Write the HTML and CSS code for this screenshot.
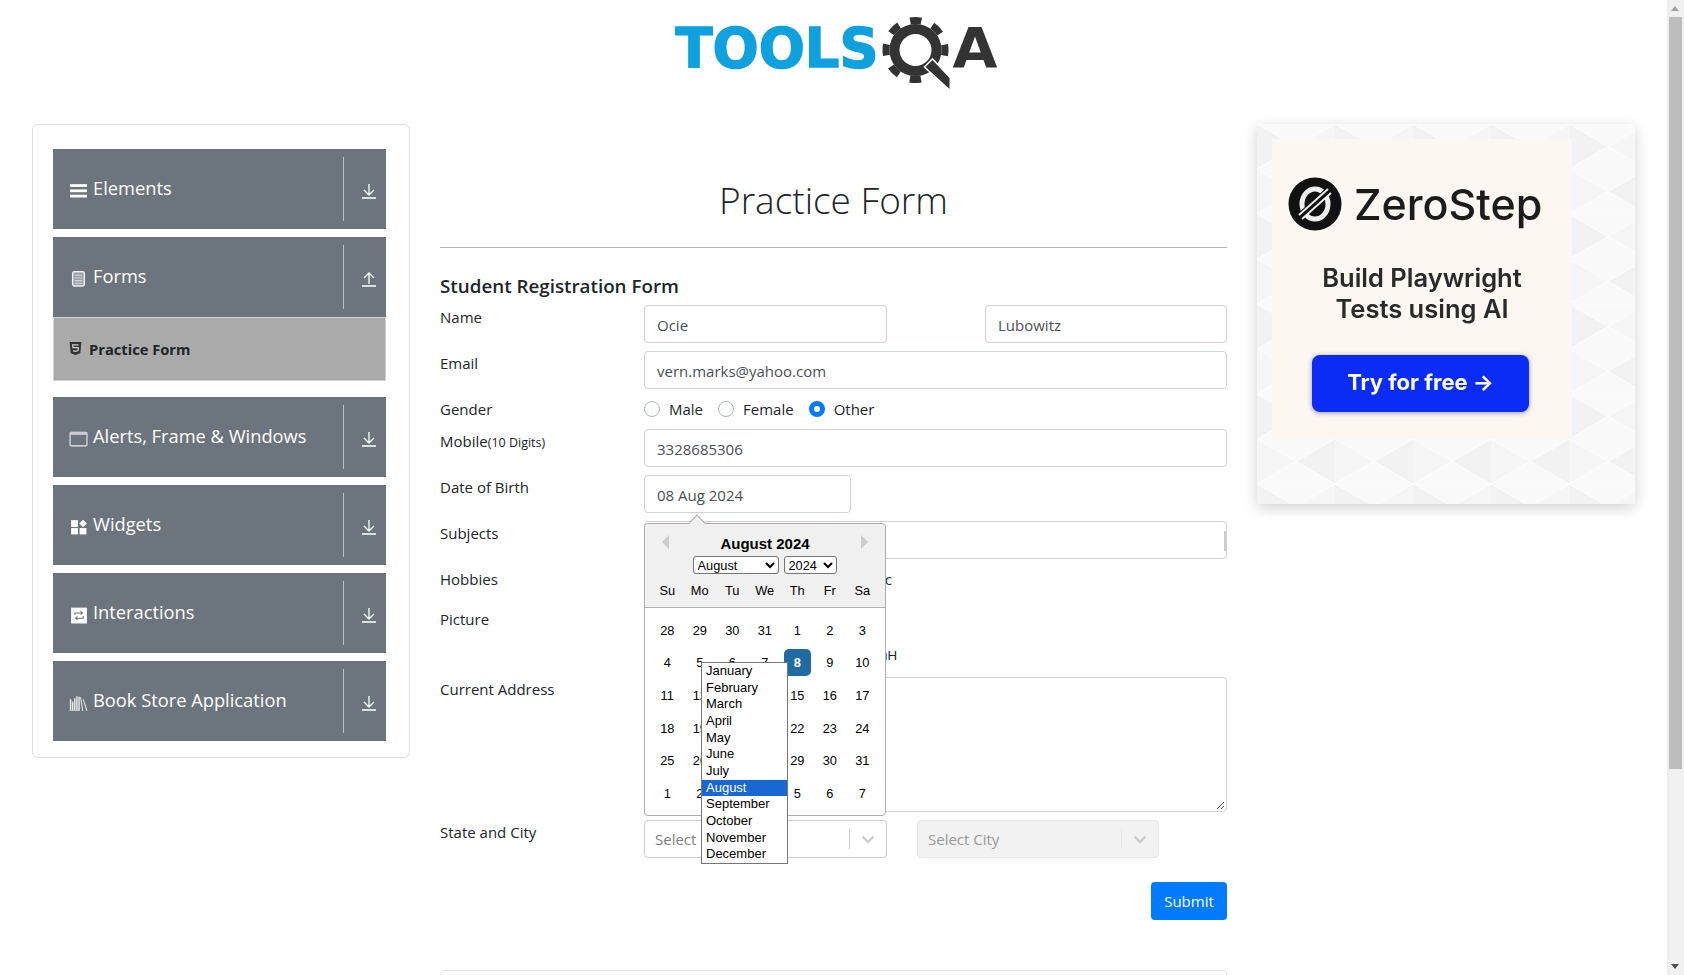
FILE: index.html
```html
<!doctype html>
<html>

	<head>

		<meta name="viewport" content="width=device-width, initial-scale=1.0">
		<title>ToolsQA</title>

		<link rel="stylesheet" href="styles.css">

	</head>

	<body>

		<header class="siteHeader">
			<svg class="logo" viewBox="663.5 0 340 100" width="340" height="100">
				<text class="logoTools" x="675" y="67" textLength="203" lengthAdjust="spacingAndGlyphs">TOOLS</text>
				<circle cx="915" cy="50" r="21" fill="none" stroke="#333" stroke-width="10"/>
				<circle cx="915" cy="50" r="29.5" fill="none" stroke="#333" stroke-width="7" stroke-dasharray="11.2 11.97" stroke-dashoffset="5.6"/>
				<polygon points="925,67 932,60 949,78 949,89" fill="#333" stroke="#fff" stroke-width="3" paint-order="stroke"/>
				<text class="logoA" x="952" y="67" textLength="45" lengthAdjust="spacingAndGlyphs">A</text>
			</svg>
		</header>

		<div class="pageGrid">

			<aside class="sideCard">

				<div class="group">
					<div class="groupHeader">
						<span class="groupTitle">
							<svg class="groupIcon" viewBox="0 0 18 18"><rect x="1" y="3" width="16" height="2.6" fill="#fff"/><rect x="1" y="8" width="16" height="2.6" fill="#fff"/><rect x="1" y="13" width="16" height="2.6" fill="#fff"/></svg>
							Elements
						</span>
						<span class="groupArrow"><svg viewBox="0 0 16 16"><path d="M8 1v10M3 7l5 5 5-5M1 15h14" fill="none" stroke="#fff" stroke-width="1.3"/></svg></span>
					</div>
				</div>

				<div class="group">
					<div class="groupHeader">
						<span class="groupTitle">
							<svg class="groupIcon" viewBox="0 0 18 18"><rect x="3.5" y="2.5" width="11" height="13.5" rx="1.5" fill="#9aa0a6" stroke="#eee" stroke-width="1.4"/><path d="M5.5 6h7M5.5 8.5h7M5.5 11h7M5.5 13.5h7" stroke="#d8d8d8" stroke-width="1"/></svg>
							Forms
						</span>
						<span class="groupArrow"><svg viewBox="0 0 16 16"><path d="M8 13V3M3 7l5-5 5 5M1 15h14" fill="none" stroke="#fff" stroke-width="1.3"/></svg></span>
					</div>
					<div class="subItem">
						<svg class="subIcon" viewBox="0 0 14 14"><path d="M1.5 1h11l-1 10.5L7 13l-4.5-1.5z" fill="#333"/><path d="M9.8 3.6H4.4l.2 2.6h5l-.2 2.7L7 9.7l-2.3-.8" fill="none" stroke="#ccc" stroke-width="1.2"/></svg>
						Practice Form
					</div>
				</div>

				<div class="group groupGap">
					<div class="groupHeader">
						<span class="groupTitle">
							<svg class="groupIcon" viewBox="0 0 18 18"><rect x="1" y="3" width="16" height="13" rx="1" fill="none" stroke="#eee" stroke-width="1"/><rect x="1" y="3" width="16" height="2.6" fill="#c8ccd0"/></svg>
							Alerts, Frame &amp; Windows
						</span>
						<span class="groupArrow"><svg viewBox="0 0 16 16"><path d="M8 1v10M3 7l5 5 5-5M1 15h14" fill="none" stroke="#fff" stroke-width="1.3"/></svg></span>
					</div>
				</div>

				<div class="group">
					<div class="groupHeader">
						<span class="groupTitle">
							<svg class="groupIcon" viewBox="0 0 18 18"><rect x="2" y="3" width="6.5" height="6.5" fill="#fff"/><rect x="2" y="10.5" width="6.5" height="6" fill="#fff"/><rect x="10" y="10.5" width="6.5" height="6" fill="#fff"/><path d="M13.3 2.5l3.6 3.6-3.6 3.6-3.6-3.6z" fill="#fff"/></svg>
							Widgets
						</span>
						<span class="groupArrow"><svg viewBox="0 0 16 16"><path d="M8 1v10M3 7l5 5 5-5M1 15h14" fill="none" stroke="#fff" stroke-width="1.3"/></svg></span>
					</div>
				</div>

				<div class="group">
					<div class="groupHeader">
						<span class="groupTitle">
							<svg class="groupIcon" viewBox="0 0 18 18"><rect x="2" y="2.500" width="15" height="15" fill="#fff"/><path d="M5.500 9.500V7.500h7M11 5.800l1.800 1.700L11 9.200M13.500 10.500v2h-7M8 14.200l-1.800-1.700L8 10.800" fill="none" stroke="#6c757d" stroke-width="1"/></svg>
							Interactions
						</span>
						<span class="groupArrow"><svg viewBox="0 0 16 16"><path d="M8 1v10M3 7l5 5 5-5M1 15h14" fill="none" stroke="#fff" stroke-width="1.3"/></svg></span>
					</div>
				</div>

				<div class="group">
					<div class="groupHeader">
						<span class="groupTitle">
							<svg class="groupIcon" viewBox="0 0 18 18"><path d="M1.500 6v11M3.500 8v9M5.500 5v12M7.500 3v14M9.500 3.500v13.500" stroke="#e8e8e8" stroke-width="1.400"/><path d="M11 4l2 13M13.500 6l3.500 11" stroke="#e8e8e8" stroke-width="1"/></svg>
							Book Store Application
						</span>
						<span class="groupArrow"><svg viewBox="0 0 16 16"><path d="M8 1v10M3 7l5 5 5-5M1 15h14" fill="none" stroke="#fff" stroke-width="1.3"/></svg></span>
					</div>
				</div>

			</aside>

			<main class="mainCol">

				<h1 class="pageTitle">Practice Form</h1>
				<h5 class="formTitle">Student Registration Form</h5>

				<form class="regForm">

					<div class="formRow">
						<label class="rowLabel">Name</label>
						<div class="nameFields">
							<div class="field">Ocie</div>
							<div class="field">Lubowitz</div>
						</div>
					</div>

					<div class="formRow">
						<label class="rowLabel">Email</label>
						<div class="field">vern.marks@yahoo.com</div>
					</div>

					<div class="formRow">
						<label class="rowLabel">Gender</label>
						<div class="radioList">
							<span class="radioItem"><i class="radio"></i>Male</span>
							<span class="radioItem"><i class="radio"></i>Female</span>
							<span class="radioItem"><i class="radio radioOn"></i>Other</span>
						</div>
					</div>

					<div class="formRow">
						<label class="rowLabel">Mobile<small class="labelHint">(10 Digits)</small></label>
						<div class="field">3328685306</div>
					</div>

					<div class="formRow">
						<label class="rowLabel">Date of Birth</label>
						<div class="dobWrap">

							<div class="field dobField">08 Aug 2024</div>

							<!-- calendar popup, sits over the rows below -->
							<div class="datePicker">
								<div class="pickerHead">
									<i class="navArrow navPrev"></i>
									<i class="navArrow navNext"></i>
									<div class="pickerMonth">August 2024</div>
									<div class="pickerSelects">
										<select class="monthSelect"><option>August</option></select>
										<select class="yearSelect"><option>2024</option></select>
									</div>
									<div class="weekRow dayNames">
										<span>Su</span><span>Mo</span><span>Tu</span><span>We</span><span>Th</span><span>Fr</span><span>Sa</span>
									</div>
								</div>
								<div class="pickerBody">
									<div class="weekRow"><span>28</span><span>29</span><span>30</span><span>31</span><span>1</span><span>2</span><span>3</span></div>
									<div class="weekRow"><span>4</span><span>5</span><span>6</span><span>7</span><span class="daySelected">8</span><span>9</span><span>10</span></div>
									<div class="weekRow"><span>11</span><span>12</span><span>13</span><span>14</span><span>15</span><span>16</span><span>17</span></div>
									<div class="weekRow"><span>18</span><span>19</span><span>20</span><span>21</span><span>22</span><span>23</span><span>24</span></div>
									<div class="weekRow"><span>25</span><span>26</span><span>27</span><span>28</span><span>29</span><span>30</span><span>31</span></div>
									<div class="weekRow"><span>1</span><span>2</span><span>3</span><span>4</span><span>5</span><span>6</span><span>7</span></div>
								</div>
								<ul class="monthList">
									<li>January</li>
									<li>February</li>
									<li>March</li>
									<li>April</li>
									<li>May</li>
									<li>June</li>
									<li>July</li>
									<li class="monthOn">August</li>
									<li>September</li>
									<li>October</li>
									<li>November</li>
									<li>December</li>
								</ul>
							</div>

						</div>
					</div>

					<div class="formRow">
						<label class="rowLabel">Subjects</label>
						<div class="field subjectField"></div>
					</div>

					<div class="formRow">
						<label class="rowLabel">Hobbies</label>
						<div class="hobbyList">
							<span>Sports</span><span>Reading</span><span>Music</span>
						</div>
					</div>

					<div class="formRow pictureRow">
						<label class="rowLabel">Picture</label>
						<div class="fileBox">
							<div>Select picture</div>
							<div class="fileName">Choose File uH</div>
						</div>
					</div>

					<div class="formRow">
						<label class="rowLabel">Current Address</label>
						<div class="field addressField">
							<svg class="resizeGrip" viewBox="0 0 10 10" width="10" height="10"><path d="M9 2L2 9M9 6L6 9" stroke="#555" stroke-width="1"/></svg>
						</div>
					</div>

					<div class="formRow">
						<label class="rowLabel">State and City</label>
						<div class="stateFields">
							<div class="pick">
								<span class="pickText">Select State</span>
								<span class="pickBar"></span>
								<svg class="pickChevron" viewBox="0 0 20 20" width="20" height="20"><path d="M4.500 7.500L10 13l5.500-5.500" fill="none" stroke="#ccc" stroke-width="2.400"/></svg>
							</div>
							<div class="pick pickOff">
								<span class="pickText">Select City</span>
								<span class="pickBar"></span>
								<svg class="pickChevron" viewBox="0 0 20 20" width="20" height="20"><path d="M4.500 7.500L10 13l5.500-5.500" fill="none" stroke="#ccc" stroke-width="2.400"/></svg>
							</div>
						</div>
					</div>

					<div class="submitRow">
						<button class="submitBtn" type="button">Submit</button>
					</div>

				</form>

				<div class="belowBox"></div>

			</main>

			<aside class="adCol">
				<div class="adBox">

					<svg class="adPattern" width="378" height="380">
						<defs>
							<pattern id="triPattern" width="78" height="90" patternUnits="userSpaceOnUse">
								<path d="M0 0L39 22L0 45zM39 67L78 45L78 90z" fill="#f2f2f3"/>
								<path d="M39 22L78 0L78 45zM0 45L39 67L0 90z" fill="#f6f6f7"/>
								<path d="M0 0H78M0 0L78 45L0 90M78 0L0 45L78 90" fill="none" stroke="#fdfdfd" stroke-width="1"/>
							</pattern>
						</defs>
						<rect width="378" height="380" fill="#f9f9fa"/>
						<rect width="378" height="380" fill="url(#triPattern)"/>
					</svg>

					<div class="adInner">
						<div class="adBrand">
							<svg class="adLogo" viewBox="0 0 54 54" width="54" height="54">
								<circle cx="27" cy="27" r="26.500" fill="#111"/>
								<ellipse cx="27" cy="27" rx="13" ry="15" fill="none" stroke="#eee" stroke-width="5"/>
								<path d="M11 40L41 13" stroke="#111" stroke-width="7"/>
								<path d="M11 38L40 12M14 42L43 16" stroke="#eee" stroke-width="1.800"/>
							</svg>
							<span class="adName">ZeroStep</span>
						</div>
						<div class="adLine">Build Playwright<br>Tests using AI</div>
						<div class="adBtn">Try for free →</div>
					</div>

				</div>
			</aside>

		</div>

		<!-- window scrollbar -->
		<div class="scrollBar">
			<i class="scrollUp"></i>
			<div class="scrollThumb"></div>
			<i class="scrollDown"></i>
		</div>

	</body>

</html>
```

FILE: styles.css
```css
html, body {
	margin: 0; padding: 0;
	height: 975px;
	overflow: hidden;
	font-family: "Open Sans", sans-serif;
	font-size: 15px;
	color: #212529;
	background-color: white;
}

/* top logo */
.siteHeader {
	width: 1667px;
	height: 124px;
	text-align: center;
}

.logo {
	display: inline-block;
}

.logoTools {
	font-family: "DejaVu Sans", sans-serif;
	font-weight: bold;
	font-size: 55px;
	fill: #0ea1de;
	stroke: #0ea1de;
	stroke-width: 1.5px;
}

.logoA {
	font-family: "DejaVu Sans", sans-serif;
	font-weight: bold;
	font-size: 55px;
	fill: #333;
}

.pageGrid {
	display: grid;
	grid-template-columns: 378px 787px 378px;
	gap: 30px;
	padding-left: 32px;
}

/* left menu */
.sideCard {
	box-sizing: border-box;
	height: 634px;
	padding: 24px 23px 0 20px;
	border: 1px solid #dfdfdf;
	border-radius: 6px;
}

.group {
	margin-bottom: 8px;
}

.groupGap {
	margin-top: 16px;
}

.groupHeader {
	display: flex;
	align-items: center;
	justify-content: space-between;
	height: 80px;
	padding-left: 16px;
	background-color: #6c757d;
	color: white;
	font-size: 18.300px;
}

.groupTitle {
	display: flex;
	align-items: center;
	gap: 5px;
	margin-top: -3px;
}

.groupIcon {
	width: 19px;
	height: 19px;
	margin-top: 5px;
}

.groupArrow {
	display: flex;
	align-items: center;
	justify-content: flex-end;
	box-sizing: border-box;
	width: 43px;
	height: 64px;
	padding: 4px 9px 0 0;
	border-left: 1px solid #b9bec3;
}

.groupArrow svg {
	width: 16px;
	height: 18px;
}

.subItem {
	display: flex;
	align-items: center;
	gap: 6px;
	box-sizing: border-box;
	height: 64px;
	margin-bottom: 16px;
	padding-left: 14px;
	background-color: #aaa;
	border: 1px solid #cfd3d7;
	font-size: 14.700px;
	font-weight: 700;
}

.subIcon {
	width: 15px;
	height: 15px;
	margin-top: -2px;
}

.group:has(.subItem) {
	margin-bottom: 0;
}

/* middle column */
.pageTitle {
	margin: 0;
	height: 124px;
	box-sizing: border-box;
	padding-top: 50px;
	border-bottom: 1px solid #b4b8bc;
	text-align: center;
	font-size: 37px;
	font-weight: 300;
	line-height: 51px;
	color: #212529;
}

.formTitle {
	margin: 0;
	padding-top: 24px;
	height: 33px;
	font-size: 18.800px;
	font-weight: 600;
	line-height: 28px;
}

.regForm {
	display: flow-root;
}

.formRow {
	display: grid;
	grid-template-columns: 204px 583px;
	margin-bottom: 8px;
}

.rowLabel {
	line-height: 24px;
}

.labelHint {
	font-size: 12.500px;
}

.field {
	box-sizing: border-box;
	height: 38px;
	padding: 0 12px;
	border: 1px solid #ced4da;
	border-radius: 4px;
	color: #495057;
	line-height: 38px;
}

.nameFields {
	display: grid;
	grid-template-columns: 243px 242px;
	justify-content: space-between;
}

.radioList {
	display: flex;
	align-items: center;
	height: 24px;
	gap: 15px;
}

.radioItem {
	display: flex;
	align-items: center;
	gap: 9px;
}

.radio {
	box-sizing: border-box;
	width: 16px;
	height: 16px;
	background-color: white;
	border: 1px solid #adb5bd;
	border-radius: 50%;
}

.radioOn {
	border: 5px solid #007bff;
}

.dobWrap {
	position: relative;
}

.dobField {
	width: 207px;
}

/* date picker popup */
.datePicker {
	position: absolute;
	top: 48px;
	left: 0;
	z-index: 5;
	box-sizing: border-box;
	width: 242px;
	height: 293px;
	background-color: white;
	border: 1px solid #aeaeae;
	border-radius: 4px;
	font-family: "Liberation Sans", sans-serif;
	font-size: 12.800px;
	color: #000;
}

.datePicker::before {
	content: "";
	position: absolute;
	top: -7px;
	left: 46px;
	width: 11px;
	height: 11px;
	background-color: #f0f0f0;
	border-top: 1px solid #aeaeae;
	border-left: 1px solid #aeaeae;
	transform: rotate(45deg);
}

.pickerHead {
	position: relative;
	box-sizing: border-box;
	height: 84px;
	padding-top: 11px;
	background-color: #f0f0f0;
	border-bottom: 1px solid #aeaeae;
	border-radius: 4px 4px 0 0;
}

.navArrow {
	position: absolute;
	top: 11px;
	width: 0;
	height: 0;
	border-top: 7px solid transparent;
	border-bottom: 7px solid transparent;
}

.navPrev {
	left: 17px;
	border-right: 7px solid #ccc;
}

.navNext {
	right: 17px;
	border-left: 7px solid #ccc;
}

.pickerMonth {
	text-align: center;
	font-size: 15px;
	font-weight: bold;
	line-height: 17px;
}

.pickerSelects {
	display: flex;
	justify-content: center;
	gap: 5px;
	margin-top: 4px;
	margin-left: -1px;
}

.monthSelect, .yearSelect {
	box-sizing: border-box;
	height: 18px;
	padding: 0;
	background-color: white;
	border: 1px solid #767676;
	border-radius: 3px;
	font-family: "Liberation Sans", sans-serif;
	font-size: 12.800px;
}

.monthSelect {
	width: 86px;
}

.yearSelect {
	width: 53px;
}

.weekRow {
	display: grid;
	grid-template-columns: repeat(7, 32.500px);
	padding-left: 6px;
	text-align: center;
	line-height: 27px;
}

.dayNames {
	margin-top: 3px;
}

.pickerBody {
	padding-top: 6px;
}

.pickerBody .weekRow {
	height: 32.600px;
	align-items: center;
}

.daySelected {
	width: 27px;
	margin: 0 auto;
	background-color: #216ba5;
	border-radius: 5px;
	color: white;
	font-weight: bold;
}

.monthList {
	position: absolute;
	top: 138px;
	left: 56px;
	box-sizing: border-box;
	width: 87px;
	height: 202px;
	margin: 0;
	padding: 0;
	list-style: none;
	background-color: white;
	border: 1px solid #767676;
	font-size: 13px;
}

.monthList li {
	height: 16.660px;
	padding-left: 4px;
	line-height: 15.500px;
}

.monthList .monthOn {
	background-color: #1967d2;
	color: white;
}

/* rows under the popup */
.subjectField {
	position: relative;
}

.subjectField::after {
	content: "";
	position: absolute;
	top: 9px;
	right: 0;
	width: 2px;
	height: 20px;
	background-color: #ccc;
}

.hobbyList {
	display: flex;
	justify-content: space-between;
	width: 248px;
	line-height: 24px;
}

.pictureRow .rowLabel {
	padding-top: 8px;
}

.pictureRow {
	height: 70px;
}

.fileBox {
	display: flex;
	flex-direction: column;
	justify-content: flex-end;
	width: 253px;
	padding-bottom: 6px;
	font-family: "Liberation Sans", sans-serif;
	font-size: 13.300px;
}

.fileName {
	text-align: right;
}

.addressField {
	position: relative;
	height: 135px;
}

.resizeGrip {
	position: absolute;
	right: 1px;
	bottom: 1px;
}

.stateFields {
	display: grid;
	grid-template-columns: 243px 242px;
	gap: 30px;
}

.pick {
	display: flex;
	align-items: center;
	box-sizing: border-box;
	height: 38px;
	padding: 0 8px 0 10px;
	border: 1px solid #ccc;
	border-radius: 4px;
	color: #808080;
}

.pickText {
	flex: 1;
}

.pickBar {
	width: 1px;
	height: 20px;
	margin-right: 8px;
	background-color: #ccc;
}

.pickOff {
	background-color: #f2f2f2;
	border-color: #e6e6e6;
	color: #999;
}

.pickOff .pickBar {
	background-color: #e6e6e6;
}

.submitRow {
	display: flex;
	justify-content: flex-end;
	margin-top: 24px;
}

.submitBtn {
	width: 76px;
	height: 38px;
	padding: 0;
	background-color: #007bff;
	border: none;
	border-radius: 4px;
	color: white;
	font-family: "Open Sans", sans-serif;
	font-size: 15px;
}

.belowBox {
	height: 60px;
	margin-top: 50px;
	border: 1px solid #dee2e6;
	border-radius: 4px;
}

/* right ad */
.adBox {
	position: relative;
	box-sizing: border-box;
	width: 378px;
	height: 380px;
	padding: 15px;
	box-shadow: 0 4px 14px rgba(0, 0, 0, 0.18);
}

.adPattern {
	position: absolute;
	top: 0;
	left: 0;
}

.adInner {
	position: relative;
	box-sizing: border-box;
	width: 300px;
	height: 300px;
	padding-top: 38px;
	background-color: #fcf7f1;
	font-family: "Inter", sans-serif;
	color: #1c1c1c;
	filter: blur(0.300px);
}

.adBrand {
	display: flex;
	align-items: center;
	gap: 12px;
	height: 54px;
	padding-left: 16px;
}

.adName {
	font-size: 43px;
	font-weight: 500;
}

.adLine {
	margin-top: 31px;
	text-align: center;
	font-size: 25.500px;
	font-weight: 600;
	line-height: 31px;
	color: #2a2a2a;
}

.adBtn {
	width: 217px;
	height: 57px;
	margin: 31px 0 0 40px;
	background-color: #0a2cf5;
	border-radius: 8px;
	box-shadow: 0 1px 5px rgba(0, 0, 60, 0.4);
	text-align: center;
	color: white;
	font-size: 22px;
	font-weight: 700;
	line-height: 55px;
}

/* scrollbar on the right edge */
.scrollBar {
	position: fixed;
	top: 0;
	right: 0;
	width: 17px;
	height: 975px;
	background-color: #f0f0f0;
}

.scrollThumb {
	position: absolute;
	top: 17px;
	left: 2px;
	width: 13px;
	height: 752px;
	background-color: #bdbdbd;
}

.scrollUp, .scrollDown {
	position: absolute;
	left: 4px;
	width: 0;
	height: 0;
	border-left: 4.500px solid transparent;
	border-right: 4.500px solid transparent;
}

.scrollUp {
	top: 6px;
	border-bottom: 5px solid #a3a3a3;
}

.scrollDown {
	bottom: 6px;
	border-top: 5px solid #505050;
}
```
